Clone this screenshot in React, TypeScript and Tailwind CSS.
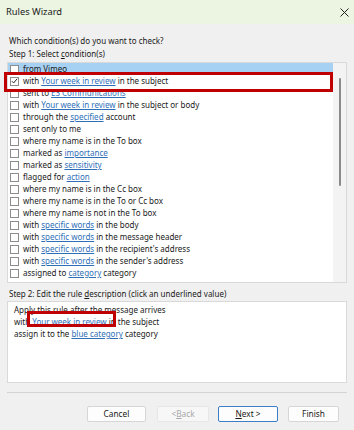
import React from 'react';

type Part = string | { link: string };

const conditions: Part[][] = [
  ['from Vimeo'],
  ['with ', { link: 'Your week in review' }, ' in the subject'],
  ['sent to ', { link: 'ES Communications' }],
  ['with ', { link: 'Your week in review' }, ' in the subject or body'],
  ['through the ', { link: 'specified' }, ' account'],
  ['sent only to me'],
  ['where my name is in the To box'],
  ['marked as ', { link: 'importance' }],
  ['marked as ', { link: 'sensitivity' }],
  ['flagged for ', { link: 'action' }],
  ['where my name is in the Cc box'],
  ['where my name is in the To or Cc box'],
  ['where my name is not in the To box'],
  ['with ', { link: 'specific words' }, ' in the body'],
  ['with ', { link: 'specific words' }, ' in the message header'],
  ['with ', { link: 'specific words' }, " in the recipient's address"],
  ['with ', { link: 'specific words' }, " in the sender's address"],
  ['assigned to ', { link: 'category' }, ' category'],
];

const Link = ({ children }: { children: React.ReactNode }) => (
  <span className="text-[#2f6fb8] underline decoration-[#2f6fb8]">{children}</span>
);

const Checkbox = ({ checked }: { checked?: boolean }) => (
  <span className="w-[9px] h-[9px] border border-[#8c8c8c] bg-white flex items-center justify-center shrink-0">
    {checked && (
      <svg width="8" height="8" viewBox="0 0 8 8">
        <path d="M1 4.2 L3 6.2 L7 1.5" fill="none" stroke="#1a1a1a" strokeWidth="1.1" />
      </svg>
    )}
  </span>
);

const Btn = ({ children, primary, disabled, w }: { children: React.ReactNode; primary?: boolean; disabled?: boolean; w: string }) => (
  <button
    type="button"
    className={
      w +
      ' h-[16px] rounded-[2px] text-[8.3px] leading-none flex items-center justify-center ' +
      (primary
        ? 'border border-[#3c7fc6] bg-[#fdfdfd] text-[#1a1a1a]'
        : disabled
        ? 'border border-[#e6e6e6] bg-[#f7f7f7] text-[#a8a8a8]'
        : 'border border-[#d6d6d6] bg-[#fdfdfd] text-[#1a1a1a]')
    }
  >
    {children}
  </button>
);

export default function App() {
  return (
    <div
      className="w-[354px] h-[430px] bg-[#f0f0f0] flex flex-col text-[#1a1a1a] overflow-hidden relative"
      style={{ fontFamily: '"Noto Sans", "Open Sans", sans-serif' }}
    >
      {/* title bar */}
      <div className="h-[24px] bg-[#ebf5e2] flex items-center justify-between pl-[6px] pr-[5px] shrink-0">
        <span className="text-[9.3px]">Rules Wizard</span>
        <svg width="9" height="9" viewBox="0 0 9 9">
          <path d="M0.5 0.5 L8.5 8.5 M8.5 0.5 L0.5 8.5" stroke="#222" strokeWidth="1" />
        </svg>
      </div>

      <div className="flex flex-col px-[7px] text-[8px] leading-[12px]">
        <div className="pl-[2px] mt-[11px]">Which condition(s) do you want to check?</div>
        <div className="pl-[2px] mt-[1px]">
          Step 1: Select <span className="underline">c</span>ondition(s)
        </div>

        {/* conditions list */}
        <div className="mt-[2px] h-[221px] border border-[#d9d9d9] bg-white flex">
          <div className="flex-1 flex flex-col">
            {conditions.map((parts, i) => (
              <div
                key={i}
                className={
                  'h-[12px] flex items-center gap-[4px] pl-[2px] whitespace-nowrap ' +
                  (i === 0 ? 'bg-[#a7d1f2]' : '')
                }
              >
                <Checkbox checked={i === 1} />
                <span>
                  {parts.map((p, j) =>
                    typeof p === 'string' ? <span key={j}>{p}</span> : <Link key={j}>{p.link}</Link>
                  )}
                </span>
              </div>
            ))}
          </div>
          <div className="w-[13px] bg-[#f3f3f3] flex justify-center pt-[15px]">
            <div className="w-[2px] h-[108px] rounded-full bg-[#8a8a8a]" />
          </div>
        </div>

        <div className="pl-[2px] mt-[5px]">
          Step 2: Edit the rule <span className="underline">d</span>escription (click an underlined value)
        </div>

        {/* description */}
        <div className="mt-[1px] h-[82px] border border-[#d9d9d9] bg-white px-[6px] pt-[2px] relative">
          <div>Apply this rule after the message arrives</div>
          <div>
            with <Link>Your week in review</Link> in the subject
          </div>
          <div>
            assign it to the <Link>blue category</Link> category
          </div>
          <div className="absolute left-[19px] top-[9px] w-[89px] h-[16px] border-[3px] border-[#c00000]" />
        </div>

        <div className="mt-[9px] h-px bg-[#d4d4d4]" />

        <div className="mt-[13px] flex justify-end mr-[8px]">
          <Btn w="w-[59px]">Cancel</Btn>
          <Btn w="w-[52px] ml-[11px]" disabled>
            &lt; <span className="underline">B</span>ack
          </Btn>
          <Btn w="w-[60px] ml-[9px]" primary>
            <span className="underline">N</span>ext &gt;
          </Btn>
          <Btn w="w-[51px] ml-[10px]">Finish</Btn>
        </div>
      </div>

      {/* highlight on second condition */}
      <div className="absolute left-[4px] top-[72px] w-[329px] h-[20px] border-[3px] border-[#c00000]" />
    </div>
  );
}
